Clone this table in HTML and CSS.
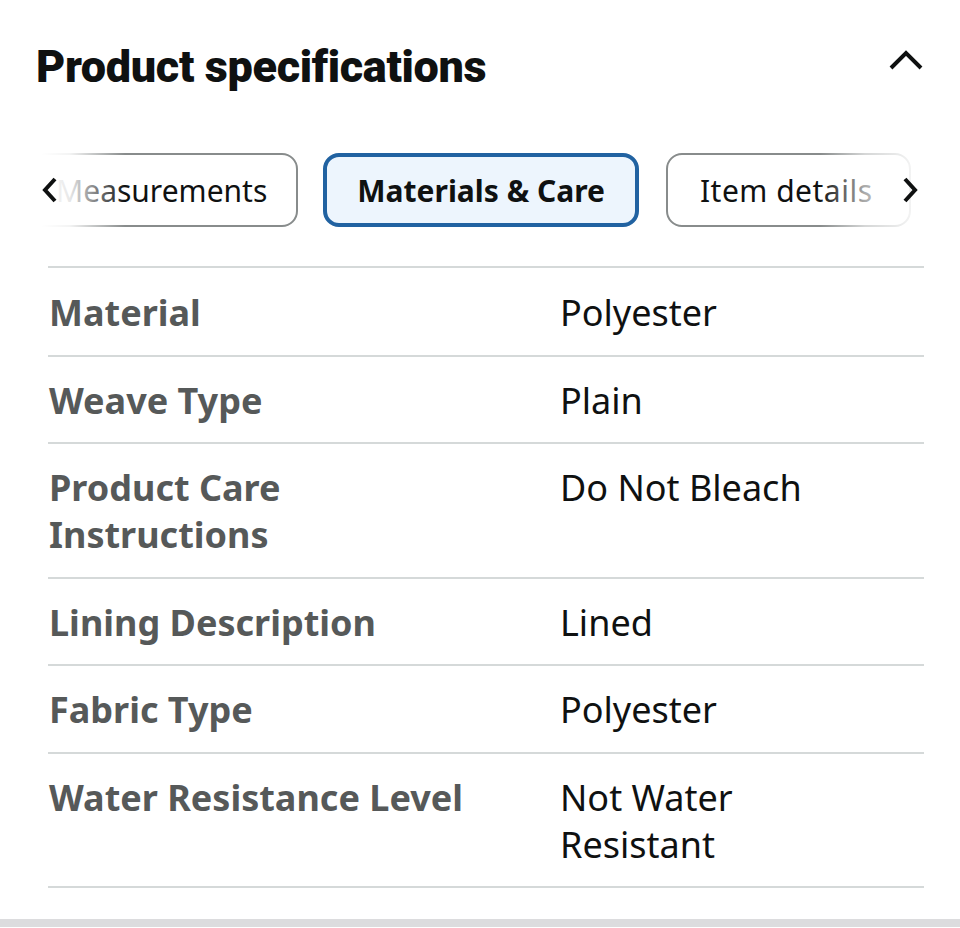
FILE: index.html
```html
<!DOCTYPE html>
<html lang="en">
<head>
    <meta charset="UTF-8">
    <meta name="viewport" content="width=device-width, initial-scale=1.0">
    <title>Product specifications</title>
    <link rel="stylesheet" href="styles.css">
</head>
<body>
    <section class="specs">
        <header class="specs-header">
            <h2 class="specs-title">Product specifications</h2>
            <svg class="collapse-icon" width="36" height="22" viewBox="0 0 36 22" aria-hidden="true">
                <path d="M3 19 L18 4 L33 19" fill="none" stroke="#0f1111" stroke-width="4"/>
            </svg>
        </header>

        <div class="tab-strip">
            <div class="tabs">
                <button class="tab">Measurements</button>
                <button class="tab tab-active">Materials &amp; Care</button>
                <button class="tab tab-last">Item details</button>
            </div>
            <div class="fade fade-left">
                <svg width="18" height="28" viewBox="0 0 18 28" aria-hidden="true">
                    <path d="M14 3 L4 14 L14 25" fill="none" stroke="#0f1111" stroke-width="4"/>
                </svg>
            </div>
            <div class="fade fade-right">
                <svg width="18" height="28" viewBox="0 0 18 28" aria-hidden="true">
                    <path d="M4 3 L14 14 L4 25" fill="none" stroke="#0f1111" stroke-width="4"/>
                </svg>
            </div>
        </div>

        <div class="spec-table">
            <div class="spec-row">
                <div class="spec-label">Material</div>
                <div class="spec-value">Polyester</div>
            </div>
            <div class="spec-row">
                <div class="spec-label">Weave Type</div>
                <div class="spec-value">Plain</div>
            </div>
            <div class="spec-row">
                <div class="spec-label">Product Care<br>Instructions</div>
                <div class="spec-value">Do Not Bleach</div>
            </div>
            <div class="spec-row">
                <div class="spec-label">Lining Description</div>
                <div class="spec-value">Lined</div>
            </div>
            <div class="spec-row">
                <div class="spec-label">Fabric Type</div>
                <div class="spec-value">Polyester</div>
            </div>
            <div class="spec-row">
                <div class="spec-label">Water Resistance Level</div>
                <div class="spec-value">Not Water Resistant</div>
            </div>
        </div>
    </section>

    <div class="divider"></div>
</body>
</html>
```

FILE: styles.css
```css
* {
    box-sizing: border-box;
    margin: 0;
    padding: 0;
}

body {
    background: #fff;
    color: #0f1111;
    font-family: 'Noto Sans', 'Open Sans', sans-serif;
}

.specs {
    padding: 44px 36px 0;
}

.specs-header {
    display: flex;
    justify-content: space-between;
    align-items: flex-start;
}

.specs-title {
    font-family: Roboto, 'Noto Sans', sans-serif;
    font-size: 45px;
    font-weight: 900;
    line-height: 45px;
    letter-spacing: -0.35px;
    color: #0f1111;
}

.collapse-icon {
    margin-top: 5px;
}

.tab-strip {
    position: relative;
    margin: 64px -36px 0;
    overflow: hidden;
}

.tabs {
    display: flex;
    gap: 25px;
    padding-left: 25px;
}

.tab {
    flex: none;
    height: 74px;
    padding: 0 29px;
    border: 2px solid #888c8c;
    border-radius: 16px;
    background: #fff;
    color: #0f1111;
    font-family: 'Noto Sans', 'Open Sans', sans-serif;
    font-size: 30px;
    white-space: nowrap;
}

.tab-active {
    padding: 0 30px;
    border: 4px solid #2162a1;
    background: #edf5fd;
    font-weight: 700;
}

.tab-last {
    margin-left: 2px;
    padding: 0 36px 0 32px;
    letter-spacing: 0.5px;
}

.fade {
    position: absolute;
    top: 0;
    bottom: 0;
    display: flex;
    align-items: center;
}

.fade-left {
    left: 0;
    width: 125px;
    padding-left: 41px;
    background: linear-gradient(to right, #fff 42px, rgba(255, 255, 255, 0.9) 70px, rgba(255, 255, 255, 0) 125px);
}

.fade-right {
    right: 0;
    width: 140px;
    padding-left: 81px;
    background: linear-gradient(to right, rgba(255, 255, 255, 0) 0, rgba(255, 255, 255, 0.65) 45px, rgba(255, 255, 255, 0.8) 75px, #fff 108px);
}

.spec-table {
    margin: 39px 0 0 12px;
    border-bottom: 2px solid #d5d9d9;
}

.spec-row {
    display: grid;
    grid-template-columns: 512px 300px;
    padding: 20px 0 18.5px;
    border-top: 2px solid #d5d9d9;
    font-size: 36px;
    line-height: 47px;
}

.spec-row:first-child {
    padding-top: 21px;
}

.spec-label {
    padding-left: 1px;
    font-weight: 700;
    color: #565959;
}

.spec-value {
    color: #0f1111;
}

.divider {
    height: 8px;
    margin-top: 31px;
    background: #dcdcde;
}
```
